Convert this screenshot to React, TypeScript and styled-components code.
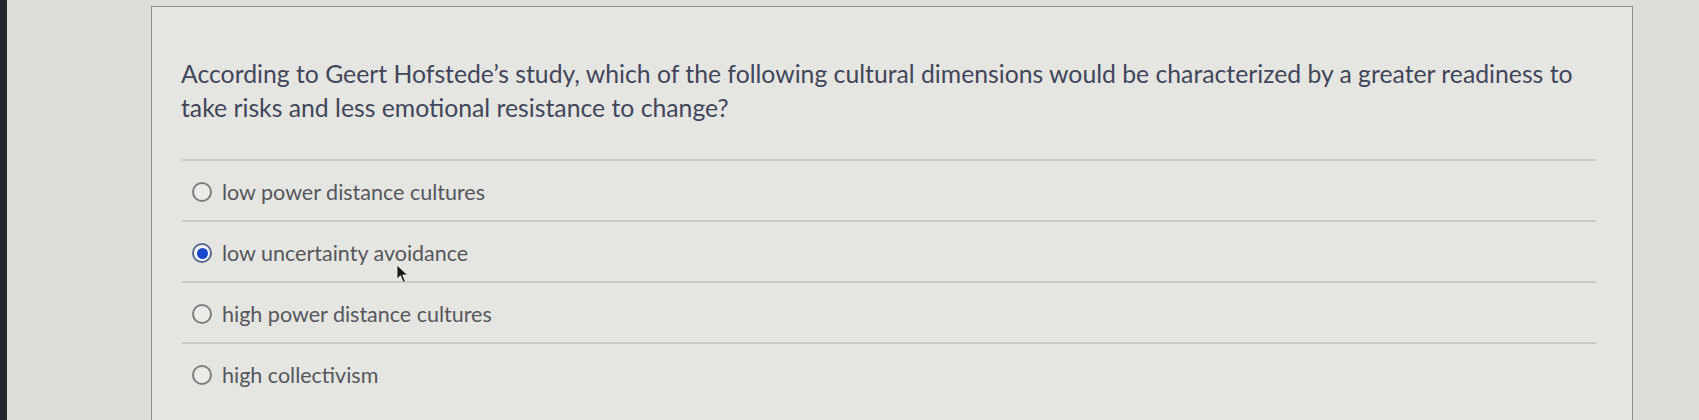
import { Fragment } from 'react'
import styled, { createGlobalStyle } from 'styled-components'

const GlobalStyle = createGlobalStyle`
  * {
    margin: 0;
    padding: 0;
    box-sizing: border-box;
  }

  body {
    background-color: #dddddA;
    font-family: 'Lato', 'Noto Sans', sans-serif;
    overflow: hidden;
  }
`

const Tela = styled.div`
  display: grid;
  grid-template-columns: 7px 144px 1482px 1fr;
  height: 420px;
  overflow: hidden;
`

const Moldura = styled.div`
  background-color: #23272d;
`

const Cartao = styled.section`
  position: relative;
  margin-top: 6px;
  background-color: #e5e5e1;
  border: 1px solid #8f8f8f;
  border-bottom: none;
  padding: 50px 36px 0 29px;
`

const Pergunta = styled.p`
  font-size: 24.75px;
  line-height: 34px;
  color: #41465a;
  max-width: 1412px;
  margin-bottom: 34px;
`

const Respostas = styled.ul`
  list-style: none;
  margin-left: 1px;
`

const Resposta = styled.li`
  display: flex;
  align-items: center;
  gap: 10px;
  height: 61px;
  padding: 3px 0 0 10px;
  border-top: 2px solid #c9c9c5;
`

const Radio = styled.span<{ marcado: boolean }>`
  display: flex;
  align-items: center;
  justify-content: center;
  flex: none;
  width: 20px;
  height: 20px;
  border-radius: 50%;
  border: 2px solid ${props => props.marcado ? '#5b6a8c' : '#7e7e7e'};
  background-color: ${props => props.marcado ? '#f4f4f6' : '#ebebe8'};

  &::after {
    content: '';
    display: ${props => props.marcado ? 'block' : 'none'};
    width: 11px;
    height: 11px;
    border-radius: 50%;
    background-color: #1846cc;
  }
`

const Texto = styled.span`
  font-size: 21.5px;
  color: #55575c;
`

const Cursor = styled.svg`
  position: absolute;
  left: 244px;
  top: 257px;
`

const opcoes = [
  'low power distance cultures',
  'low uncertainty avoidance',
  'high power distance cultures',
  'high collectivism',
]

function App() {
  const escolhida = 1

  return (
    <Fragment>
      <GlobalStyle />
      <Tela>
        <Moldura />
        <div />
        <Cartao>
          <Pergunta>
            According to Geert Hofstede’s study, which of the following cultural dimensions would be characterized by a greater readiness to take risks and less emotional resistance to change?
          </Pergunta>

          <Respostas>
            {opcoes.map((opcao, i) => (
              <Resposta key={opcao}>
                <Radio marcado={i === escolhida} />
                <Texto>{opcao}</Texto>
              </Resposta>
            ))}
          </Respostas>

          <Cursor width="13" height="21" viewBox="0 0 13 21">
            <path d="M1 1 L1 15 L4.5 11.8 L7.2 18.5 L9.4 17.6 L6.8 11 L11.5 11 Z" fill="#1a1a1a" stroke="#f2f2f2" strokeWidth="0.8" />
          </Cursor>
        </Cartao>
        <div />
      </Tela>
    </Fragment>
  )
}

export default App
